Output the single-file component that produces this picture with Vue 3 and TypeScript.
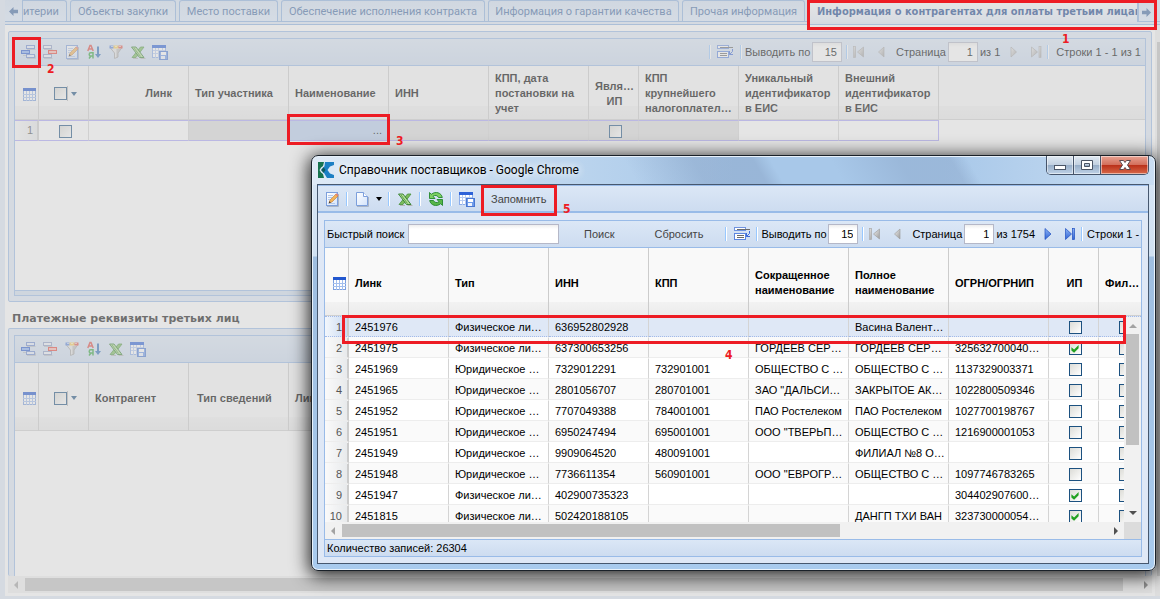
<script setup lang="ts">
import { ref } from 'vue'

interface Supplier {
  link: string
  kind: string
  inn: string
  kpp: string
  short: string
  full: string
  ogrn: string
  ip: boolean
}

const person = 'Физическое ли…'
const company = 'Юридическое …'

function supplier(link: string, kind: string, inn: string, kpp: string, short: string, full: string, ogrn: string, ip = false): Supplier {
  return { link, kind, inn, kpp, short, full, ogrn, ip }
}

const suppliers = ref<Supplier[]>([
  supplier('2451976', person, '636952802928', '', '', 'Васина Валент…', ''),
  supplier('2451975', person, '637300653256', '', 'ГОРДЕЕВ СЕР…', 'ГОРДЕЕВ СЕР…', '325632700040…', true),
  supplier('2451969', company, '7329012291', '732901001', 'ОБЩЕСТВО С …', 'ОБЩЕСТВО С …', '1137329003371'),
  supplier('2451965', company, '2801056707', '280701001', 'ЗАО "ДАЛЬСИ…', 'ЗАКРЫТОЕ АК…', '1022800509346'),
  supplier('2451952', company, '7707049388', '784001001', 'ПАО Ростелеком', 'ПАО Ростелеком', '1027700198767'),
  supplier('2451951', company, '6950247494', '695001001', 'ООО "ТВЕРЬП…', 'ОБЩЕСТВО С …', '1216900001053'),
  supplier('2451949', company, '9909064520', '480091001', '', 'ФИЛИАЛ №8 О…', ''),
  supplier('2451948', company, '7736611354', '560901001', 'ООО "ЕВРОГР…', 'ОБЩЕСТВО С …', '1097746783265'),
  supplier('2451947', person, '402900735323', '', '', '', '304402907600…', true),
  supplier('2451815', person, '502420188105', '', '', 'ДАНГП ТХИ ВАН', '323730000054…', true),
])

const selected = ref(0)
const search = ref('')

const tabs = [
  { text: 'итерии', cls: 't1' },
  { text: 'Объекты закупки', cls: 't2' },
  { text: 'Место поставки', cls: 't3' },
  { text: 'Обеспечение исполнения контракта', cls: 't4' },
  { text: 'Информация о гарантии качества', cls: 't5' },
  { text: 'Прочая информация', cls: 't6' },
  { text: 'Информация о контрагентах для оплаты третьим лицам', cls: 'active' },
]

const tools = [
  { icon: 'add', label: 'Добавить' },
  { icon: 'del', label: 'Удалить' },
  { icon: 'edit', label: 'Изменить' },
  { icon: 'sort', label: 'Сортировка' },
  { icon: 'filter', label: 'Фильтр' },
  { icon: 'excel', label: 'Экспорт в Excel' },
  { icon: 'save', label: 'Сохранить вид' },
]
const paymentTools = [tools[0], tools[1], tools[4], tools[3], tools[5], tools[6]]
</script>

<template>
  <svg class="defs" aria-hidden="true">
    <defs>
      <linearGradient id="gBlue" x1="0" y1="0" x2="0" y2="1">
        <stop offset="0" stop-color="#8db4f5" /><stop offset="1" stop-color="#2f62d4" />
      </linearGradient>
      <linearGradient id="gGrey" x1="0" y1="0" x2="1" y2="1">
        <stop offset="0" stop-color="#f0f0f0" /><stop offset="1" stop-color="#9a9a9a" />
      </linearGradient>
      <linearGradient id="gPage" x1="0" y1="0" x2="1" y2="1">
        <stop offset="0" stop-color="#ffffff" /><stop offset="1" stop-color="#d3e3fb" />
      </linearGradient>
    </defs>
    <symbol id="add" viewBox="0 0 16 16">
      <path d="M3 11.500h4M7 5.500h8.500M7 14.500h8.500v-3" stroke="#b9bfc9" fill="none" />
      <rect x="6.500" y="1.500" width="8" height="3" fill="#e4edfc" stroke="#6f8cd0" />
      <rect x="6.500" y="10.500" width="8" height="3" fill="#e4edfc" stroke="#6f8cd0" />
      <rect x="1.500" y="6.500" width="8" height="3" fill="#86aef5" stroke="#2c5fd0" />
    </symbol>
    <symbol id="del" viewBox="0 0 16 16">
      <path d="M2 5.500h8.500M2 14.500h8.500" stroke="#b9bfc9" fill="none" />
      <rect x="1.500" y="1.500" width="8" height="3" fill="#eef2fa" stroke="#8f9fc6" />
      <rect x="1.500" y="10.500" width="8" height="3" fill="#eef2fa" stroke="#8f9fc6" />
      <rect x="6.500" y="6.500" width="8" height="3" fill="#fbb9b0" stroke="#e8463c" />
    </symbol>
    <symbol id="edit" viewBox="0 0 16 16">
      <path d="M3 15.500h11.500V3" stroke="#a9b4c6" fill="none" />
      <rect x="2.500" y="1.500" width="11" height="13" fill="url(#gPage)" stroke="#7c9fdc" />
      <path d="M4 4.500h5M4 6.500h4M4 8.500h2M4 12.500h7" stroke="#b4c8e8" />
      <path d="M5 12l1-3 6-6 2 2-6 6z" fill="#f3b45a" stroke="#b87a3a" stroke-width=".6" />
      <path d="M11.500 3.500l1-1.200 2 2-1.200 1z" fill="#e77c70" />
      <path d="M5 12l.5-1.800 1.400 1.200z" fill="#222" />
    </symbol>
    <symbol id="sort" viewBox="0 0 16 16">
      <path d="M1.800 7L4 1.500h1L7.200 7M3 5h3.500" stroke="#e04a42" stroke-width="1.500" fill="none" />
      <path d="M7 14.500V8.800H4.800a1.600 1.600 0 000 3.200H7M5 12l-2 2.500" stroke="#35a53e" stroke-width="1.500" fill="none" />
      <path d="M12 2.500v9" stroke="#2e6fb8" stroke-width="2" />
      <path d="M9 10h6l-3 4z" fill="#2e6fb8" />
    </symbol>
    <symbol id="filter" viewBox="0 0 16 16">
      <path d="M2 3.500h12l-4 5.500v4L6.500 14.500V9z" fill="#e6e6e6" stroke="#a8a8a8" />
      <path d="M8.500 5v9l1.500-1V9l3-4z" fill="#a5a5a5" opacity=".6" />
      <rect x="1.500" y="1.500" width="4" height="3" fill="#5a86df" />
      <rect x="5.500" y="1.500" width="5" height="3" fill="#f9cf5a" />
      <rect x="10.500" y="1.500" width="4" height="3" fill="#e2574b" />
      <path d="M3 2.500h2M7 2.500h2M11 2.500h2" stroke="#fff" opacity=".6" />
    </symbol>
    <symbol id="excel" viewBox="0 0 16 16">
      <path d="M3 14.500h5M10.500 14.500h5" stroke="#b4b4b4" />
      <path d="M14 3h-3.500L2 13.500h4z" fill="#7cbc5e" stroke="#47913a" stroke-width=".8" />
      <path d="M1.500 3H6l8 10.500H9.500z" fill="#b4dc98" stroke="#2f7d2a" stroke-width=".9" />
      <path d="M4 4l6.500 8.500" stroke="#4f9d3d" stroke-width=".9" />
    </symbol>
    <symbol id="save" viewBox="0 0 16 16">
      <rect x=".5" y="1.500" width="13" height="12" fill="#fff" stroke="#8aacea" />
      <rect x="0" y="1" width="14" height="3" fill="#2d62d8" />
      <path d="M3.500 4v10M6.500 4v10M10.500 4v4M1 6.500h12M1 9.500h7" stroke="#b8cdf2" />
      <rect x="7.500" y="7.500" width="8" height="8" fill="#6e9bea" stroke="#4a78d2" />
      <rect x="9" y="8" width="5" height="3" fill="#fff" />
      <rect x="9" y="12" width="4" height="3" fill="#eef4ff" />
    </symbol>
    <symbol id="table" viewBox="0 0 13 13">
      <rect x=".5" y=".5" width="12" height="12" fill="#fff" stroke="#7b9fdf" />
      <path d="M3.500 3v10M6.500 3v10M9.500 3v10M0 6.500h13M0 9.500h13" stroke="#a3bfee" />
      <rect width="13" height="3" fill="#2257cf" />
    </symbol>
    <symbol id="page" viewBox="0 0 16 16">
      <path d="M3 15.500h11.500V6" stroke="#a9b4c6" fill="none" />
      <path d="M2.500 1.500h7l4 4v9h-11z" fill="url(#gPage)" stroke="#7c9fdc" />
      <path d="M9.500 1.500v4h4" fill="#fff" stroke="#7c9fdc" />
    </symbol>
    <symbol id="refresh" viewBox="0 0 16 16">
      <path d="M1.500 1.500v6H7L5 5.300C7 3.800 9.500 4.200 10.500 6.500h3.800C13.500 1.800 7.500-.2 3.300 3.300z" fill="#7fd063" stroke="#23872c" stroke-width=".9" />
      <path d="M14.500 14.500v-6H9l2 2.200C9 12.200 6.500 11.800 5.500 9.500H1.700C2.500 14.200 8.500 16.200 12.700 12.700z" fill="#58b548" stroke="#23872c" stroke-width=".9" />
    </symbol>
    <symbol id="rows" viewBox="0 0 16 16">
      <rect x=".5" y="1.500" width="11" height="3" fill="#fff" stroke="#6f93e0" />
      <rect x=".5" y="7.500" width="11" height="6" fill="#fff" stroke="#5c86e0" />
      <path d="M3 3.500h13M3 9.500h7M3 11.500h7" stroke="#6a6a6a" />
      <path d="M15.500 5v2.500l-3 3M12.500 7v3.500h3.500" stroke="#3f6bd8" fill="none" />
    </symbol>
    <symbol id="first" viewBox="0 0 12 12">
      <rect x=".5" y=".5" width="2" height="11" fill="url(#gGrey)" stroke="#aaa" stroke-width=".7" />
      <path d="M10.500 1v10L4.500 6z" fill="url(#gGrey)" stroke="#a0a0a0" stroke-width=".7" />
    </symbol>
    <symbol id="prev" viewBox="0 0 12 12">
      <path d="M9 1v10L3.500 6z" fill="url(#gGrey)" stroke="#a0a0a0" stroke-width=".7" />
    </symbol>
    <symbol id="nextOff" viewBox="0 0 12 12">
      <path d="M3 1v10l5.500-5z" fill="url(#gGrey)" stroke="#a0a0a0" stroke-width=".7" />
    </symbol>
    <symbol id="lastOff" viewBox="0 0 12 12">
      <rect x="9" y=".5" width="2" height="11" fill="url(#gGrey)" stroke="#aaa" stroke-width=".7" />
      <path d="M1.500 1v10l6-5z" fill="url(#gGrey)" stroke="#a0a0a0" stroke-width=".7" />
    </symbol>
    <symbol id="next" viewBox="0 0 12 12">
      <path d="M3 .5v11L9 6z" fill="url(#gBlue)" stroke="#1f4fc0" stroke-width=".7" />
    </symbol>
    <symbol id="last" viewBox="0 0 12 12">
      <rect x="8.500" y=".5" width="2" height="11" fill="url(#gBlue)" stroke="#1f4fc0" stroke-width=".7" />
      <path d="M1.500 .5v11l6-5.500z" fill="url(#gBlue)" stroke="#1f4fc0" stroke-width=".7" />
    </symbol>
    <symbol id="arrowL" viewBox="0 0 10 10">
      <path d="M0 5l5-5v3h5v4H5v3z" fill="#416aa3" />
    </symbol>
    <symbol id="arrowR" viewBox="0 0 10 10">
      <path d="M10 5L5 0v3H0v4h5v3z" fill="#416aa3" />
    </symbol>
  </svg>

  <main class="page">
    <nav class="tabbar">
      <div class="tabs">
        <button class="scroller left" aria-label="Назад"><svg><use href="#arrowL" /></svg></button>
        <button v-for="t in tabs" :key="t.text" class="tab" :class="t.cls">{{ t.text }}</button>
        <button class="scroller right" aria-label="Вперёд"><svg><use href="#arrowR" /></svg></button>
      </div>
    </nav>

    <div class="content">
      <div class="forms">
        <section class="panel">
          <div class="box">
            <div class="toolbar">
              <button v-for="t in tools" :key="t.icon" class="tool" :aria-label="t.label">
                <svg class="ico"><use :href="'#' + t.icon" /></svg>
              </button>
              <div class="pager">
                <i class="sep"></i>
                <button class="tool rowsbtn" aria-label="Строки"><svg class="ico"><use href="#rows" /></svg></button>
                <i class="sep"></i>
                <label class="by" for="size1">Выводить по</label>
                <input id="size1" class="num" type="text" value="15" />
                <i class="sep"></i>
                <button class="nav" aria-label="Первая"><svg><use href="#first" /></svg></button>
                <button class="nav" aria-label="Предыдущая"><svg><use href="#prev" /></svg></button>
                <label class="pg" for="page1">Страница</label>
                <input id="page1" class="num" type="text" value="1" />
                <span class="of">из 1</span>
                <button class="nav" aria-label="Следующая"><svg><use href="#nextOff" /></svg></button>
                <button class="nav" aria-label="Последняя"><svg><use href="#lastOff" /></svg></button>
                <i class="sep"></i>
                <span class="info">Строки 1 - 1 из 1</span>
              </div>
            </div>
            <div class="area first">
              <div class="headband"></div>
              <table class="grid main">
                <colgroup>
                  <col class="c-num" /><col class="c-chk" /><col class="c-100" /><col class="c-100" /><col class="c-100" />
                  <col class="c-100" /><col class="c-100" /><col class="c-50" /><col class="c-100" /><col class="c-100" /><col class="c-100" />
                </colgroup>
                <thead>
                  <tr>
                    <th class="tc"><svg class="tbl"><use href="#table" /></svg></th>
                    <th class="tc"><span class="pick"><input type="checkbox" aria-label="Выбрать все" /><i class="bar"></i><i class="caret"></i></span></th>
                    <th class="tr">Линк</th>
                    <th>Тип участника</th>
                    <th>Наименование</th>
                    <th>ИНН</th>
                    <th>КПП, дата<br />постановки на<br />учет</th>
                    <th class="tc">Явля…<br />ИП</th>
                    <th>КПП<br />крупнейшего<br />налогоплател…</th>
                    <th>Уникальный<br />идентификатор<br />в ЕИС</th>
                    <th>Внешний<br />идентификатор<br />в ЕИС</th>
                  </tr>
                </thead>
                <tbody>
                  <tr>
                    <td class="no">1</td>
                    <td class="tc"><input type="checkbox" aria-label="Выбрать строку" /></td>
                    <td></td>
                    <td class="off"></td>
                    <td class="cur">...</td>
                    <td class="off"></td>
                    <td class="off"></td>
                    <td class="off tc"><input type="checkbox" aria-label="Является ИП" /></td>
                    <td class="off"></td>
                    <td></td>
                    <td></td>
                  </tr>
                </tbody>
              </table>
            </div>
            <div class="foot"></div>
          </div>
        </section>

        <h2>Платежные реквизиты третьих лиц</h2>

        <section class="panel rest">
          <div class="box">
            <div class="toolbar">
              <button v-for="t in paymentTools" :key="t.icon" class="tool" :aria-label="t.label">
                <svg class="ico"><use :href="'#' + t.icon" /></svg>
              </button>
            </div>
            <div class="area">
              <div class="headband tall"></div>
              <table class="grid pay">
                <colgroup>
                  <col class="c-num" /><col class="c-chk" /><col class="c-100" /><col class="c-100" /><col class="c-100" />
                </colgroup>
                <thead>
                  <tr>
                    <th class="tc"><svg class="tbl"><use href="#table" /></svg></th>
                    <th class="tc"><span class="pick"><input type="checkbox" aria-label="Выбрать все" /><i class="bar"></i><i class="caret"></i></span></th>
                    <th>Контрагент</th>
                    <th class="kind">Тип сведений</th>
                    <th>Линк</th>
                  </tr>
                </thead>
              </table>
            </div>
          </div>
        </section>
        <div class="hscroll outer"><i class="al"></i><i class="thumb"></i><i class="ar"></i></div>
      </div>
      <div class="vedge"><i></i></div>
    </div>
    <div class="mask"></div>
  </main>

  <section class="window" role="dialog" aria-labelledby="wtitle">
    <header class="title">
      <svg class="logo" viewBox="0 0 16 16">
        <path d="M0 0h6L5 4 3 5.500 1.500 8 3 10.500 5 12l1 4H0z" fill="#17734f" />
        <path d="M7 0h9v3l-4 1.500L9.500 8l2.500 3.500 4 1.500v3H9l-3-5-2-3 2.500-4z" fill="#1c7fc4" />
        <path d="M3 8l2.500-3L7.500 8l-2 3z" fill="#0c5a60" />
      </svg>
      <h1 id="wtitle">Справочник поставщиков - Google Chrome</h1>
      <div class="wbtns">
        <button class="wb" aria-label="Свернуть"><svg viewBox="0 0 14 12"><rect x="1.500" y="6.500" width="11" height="4" fill="#fff" stroke="#4b5566" /></svg></button>
        <button class="wb" aria-label="Развернуть"><svg viewBox="0 0 14 12"><path d="M1.500 1.500h11v9h-11zM4.500 4.500h5v3h-5z" fill="#fff" fill-rule="evenodd" stroke="#4b5566" /></svg></button>
        <button class="wb close" aria-label="Закрыть"><svg viewBox="0 0 14 12"><path d="M1.500 1.500h4L7 3.500l1.500-2h4L9.500 6l3 4.500h-4L7 8.500l-1.500 2h-4L4.500 6z" fill="#fff" stroke="#5c4a4e" /></svg></button>
      </div>
    </header>

    <div class="client">
      <div class="toolbar wtools">
        <button class="tool" aria-label="Изменить"><svg class="ico"><use href="#edit" /></svg></button>
        <i class="sep"></i>
        <button class="tool menu" aria-label="Создать"><svg class="ico"><use href="#page" /></svg><i class="caret black"></i></button>
        <i class="sep"></i>
        <button class="tool" aria-label="Экспорт в Excel"><svg class="ico"><use href="#excel" /></svg></button>
        <i class="sep"></i>
        <button class="tool" aria-label="Обновить"><svg class="ico"><use href="#refresh" /></svg></button>
        <i class="sep"></i>
        <button class="tool" aria-label="Сохранить вид"><svg class="ico"><use href="#save" /></svg></button>
        <button class="text keep">Запомнить</button>
      </div>

      <div class="list">
        <div class="toolbar">
          <label class="quick" for="q">Быстрый поиск</label>
          <input id="q" v-model="search" class="search" type="text" />
          <button class="text find">Поиск</button>
          <button class="text reset">Сбросить</button>
          <div class="pager wide">
            <i class="sep"></i>
            <button class="tool rowsbtn" aria-label="Строки"><svg class="ico"><use href="#rows" /></svg></button>
            <i class="sep"></i>
            <label class="by" for="size2">Выводить по</label>
            <input id="size2" class="num" type="text" value="15" />
            <i class="sep"></i>
            <button class="nav" aria-label="Первая"><svg><use href="#first" /></svg></button>
            <button class="nav" aria-label="Предыдущая"><svg><use href="#prev" /></svg></button>
            <label class="pg" for="page2">Страница</label>
            <input id="page2" class="num" type="text" value="1" />
            <span class="of">из 1754</span>
            <button class="nav" aria-label="Следующая"><svg><use href="#next" /></svg></button>
            <button class="nav" aria-label="Последняя"><svg><use href="#last" /></svg></button>
            <i class="sep"></i>
            <span class="info">Строки 1 -</span>
          </div>
        </div>
        <div class="area">
          <div class="headband tall"></div>
          <table class="grid supp">
            <colgroup>
              <col class="c-num" /><col class="c-100" /><col class="c-100" /><col class="c-100" /><col class="c-100" />
              <col class="c-100" /><col class="c-100" /><col class="c-100" /><col class="c-50" /><col class="c-50" />
            </colgroup>
            <thead>
              <tr>
                <th class="tc"><svg class="tbl"><use href="#table" /></svg></th>
                <th>Линк</th>
                <th>Тип</th>
                <th>ИНН</th>
                <th>КПП</th>
                <th>Сокращенное<br />наименование</th>
                <th>Полное<br />наименование</th>
                <th>ОГРН/ОГРНИП</th>
                <th class="tc">ИП</th>
                <th>Фил…</th>
              </tr>
            </thead>
            <tbody>
              <tr v-for="(s, i) in suppliers" :key="s.link" :class="{ sel: i === selected }" @click="selected = i">
                <td class="no">{{ i + 1 }}</td>
                <td>{{ s.link }}</td>
                <td>{{ s.kind }}</td>
                <td>{{ s.inn }}</td>
                <td>{{ s.kpp }}</td>
                <td>{{ s.short }}</td>
                <td>{{ s.full }}</td>
                <td>{{ s.ogrn }}</td>
                <td class="tc"><input v-model="s.ip" type="checkbox" aria-label="ИП" /></td>
                <td class="tc"><input type="checkbox" aria-label="Филиал" /></td>
              </tr>
            </tbody>
          </table>
          <div class="vscroll"><i class="au"></i><i class="thumb"></i><i class="ad"></i></div>
        </div>
        <div class="hscroll inner"><i class="al"></i><i class="thumb"></i><i class="ar"></i><i class="corner"></i></div>
        <footer class="status">Количество записей: 26304</footer>
      </div>
    </div>
  </section>

  <div class="mark m1"></div><b class="step s1">1</b>
  <div class="mark m2"></div><b class="step s2">2</b>
  <div class="mark m3"></div><b class="step s3">3</b>
  <div class="mark m4"></div><b class="step s4">4</b>
  <div class="mark m5"></div><b class="step s5">5</b>
</template>

<style>
html,
body {
  height: 100%;
  overflow: hidden;
}
#app {
  height: 100%;
  position: relative;
}
</style>

<style scoped>
* {
  box-sizing: border-box;
}
.defs {
  position: absolute;
  width: 0;
  height: 0;
}
button,
input {
  font: inherit;
  margin: 0;
  padding: 0;
  border: 0;
  background: none;
  color: inherit;
  border-radius: 0;
}
svg {
  display: block;
}
.page {
  position: relative;
  height: 100%;
  display: flex;
  flex-direction: column;
  padding: 0 0 3px 5px;
  background: #dfe8f6;
  font: 11px/15px "Liberation Sans", Arial, sans-serif;
  overflow: hidden;
}
.mask {
  position: absolute;
  inset: 0;
  background: #ccc;
  opacity: 0.5;
}

/* tabs */
.tabbar {
  height: 25px;
  padding-bottom: 3px;
  background: #dfe8f6;
  border-bottom: 1px solid #8db2e3;
}
.tabs {
  display: flex;
  height: 22px;
  padding-right: 5px;
  gap: 3px;
  border-bottom: 1px solid #8db2e3;
  background: #d9e6f6;
}
.tab {
  flex: none;
  height: 21px;
  border: 1px solid #8db2e3;
  border-bottom: 0;
  border-radius: 3px 3px 0 0;
  padding-top: 1px;
  background: linear-gradient(#d5e3f5, #deecfd);
  color: #416aa3;
  font: 11px/19px Roboto, "Liberation Sans", sans-serif;
  white-space: nowrap;
  overflow: hidden;
}
.t1 {
  width: 44px;
  margin-left: -3px;
  border-left: 0;
  border-radius: 0 3px 0 0;
  text-align: left;
}
.t2 { width: 106px; }
.t3 { width: 99px; }
.t4 { width: 204px; }
.t5 { width: 191px; }
.t6 { width: 123px; }
.active {
  flex: 1 1 0;
  min-width: 0;
  height: 22px;
  margin-right: -3px;
  padding-left: 8px;
  text-align: left;
  background: linear-gradient(#fff, #e3ecf9);
  color: #15428b;
  font: bold 11px/20px "DejaVu Sans Condensed", "DejaVu Sans", sans-serif;
}
.scroller {
  flex: none;
  height: 21px;
  display: grid;
  place-items: center;
  padding-top: 2px;
  background: linear-gradient(#d5e3f5, #deecfd);
}
.scroller svg {
  width: 9px;
  height: 9px;
}
.left {
  width: 18px;
  border-right: 1px solid #8db2e3;
}
.right {
  width: 17px;
  border: 1px solid #8db2e3;
  border-bottom: 0;
}

/* panels */
.content {
  flex: 1;
  min-height: 0;
  display: flex;
  background: #fff;
}
.forms {
  flex: 1;
  min-width: 0;
  display: flex;
  flex-direction: column;
  padding: 6px 3px 3px;
}
.vedge {
  width: 5px;
  padding: 17px 0 20px 2px;
  background: #f1f1f1;
}
.vedge i {
  display: block;
  height: 100%;
  background: #c1c1c1;
}
.panel {
  border: 1px solid #99bbe8;
  border-radius: 2px;
  padding: 6px 5px 5px;
  background: #dfe8f6;
}
.box {
  display: flex;
  flex-direction: column;
  border: 1px solid #99bbe8;
  background: #fff;
}
.rest {
  flex: 1;
  min-height: 0;
  display: flex;
  border-bottom: 0;
  padding-bottom: 0;
}
.rest .box {
  flex: 1;
  border-bottom: 0;
}
.foot {
  height: 5px;
  border-top: 1px solid #99bbe8;
  background: #d3e1f1;
}
h2 {
  margin: 0;
  padding: 5px 0 0 4px;
  height: 26px;
  font: bold 11px/24px "DejaVu Sans", sans-serif;
  color: #111;
}
.toolbar {
  flex: none;
  display: flex;
  align-items: center;
  height: 27px;
  padding-left: 2px;
  background: linear-gradient(#dbe7f6, #cddcf0);
  border-bottom: 1px solid #99bbe8;
  white-space: nowrap;
}
.toolbar > *,
.pager > * {
  flex: none;
}
.tool {
  width: 22px;
  height: 22px;
  display: grid;
  place-items: center;
}
.ico {
  width: 16px;
  height: 16px;
}
.pager {
  display: flex;
  align-items: center;
  margin-left: auto;
  padding-right: 4px;
}
.sep {
  width: 2px;
  height: 14px;
  border-left: 1px solid #98c8ff;
  background: #fff;
}
.rowsbtn {
  width: 29px;
}
.by {
  width: 70px;
  padding-left: 3px;
}
.num {
  width: 30px;
  height: 20px;
  margin-right: 4px;
  padding-right: 4px;
  border: 1px solid #b5b8c8;
  background: linear-gradient(#eee, #fff 4px);
  text-align: right;
}
.nav {
  width: 22px;
  height: 20px;
  display: grid;
  place-items: center;
}
.nav svg {
  width: 12px;
  height: 12px;
}
.pg {
  width: 56px;
  padding-left: 4px;
}
.of {
  padding-right: 3px;
}
.pg + .num {
  margin-right: 2px;
}
.info {
  padding-left: 7px;
}

/* tables */
.area {
  position: relative;
  flex: 1;
  min-height: 0;
  overflow: hidden;
  background: #fff;
}
.first {
  flex: none;
  height: 224px;
}
.headband {
  height: 54px;
  margin-bottom: -54px;
  background: linear-gradient(#f9f9f9 75%, #f1f1f1 76%, #ececec);
  border-bottom: 1px solid #d0d0d0;
}
.tall {
  height: 68px;
  margin-bottom: -68px;
  background: linear-gradient(#f9f9f9 80%, #f2f2f2 81%, #ececec);
}
.grid {
  position: relative;
  table-layout: fixed;
  border-collapse: separate;
  border-spacing: 0;
}
.main { width: 924px; }
.pay { width: 374px; }
.supp { width: 824px; }
.c-num { width: 24px; }
.c-chk { width: 50px; }
.c-50 { width: 50px; }
.c-100 { width: 100px; }
th {
  height: 54px;
  padding: 1px 0 0 6px;
  text-align: left;
  vertical-align: middle;
  font-weight: bold;
  white-space: nowrap;
  border-right: 1px solid #ccc;
}
.pay th,
.supp th {
  height: 68px;
  padding-top: 2px;
}
.tc {
  text-align: center;
  padding-left: 2px;
}
.kind {
  padding-left: 8px;
}
.tr {
  text-align: right;
  padding-right: 16px;
}
td {
  height: 21px;
  padding: 0 0 0 6px;
  line-height: 18px;
  border-top: 1px solid transparent;
  border-right: 1px solid #d4d4d4;
  border-bottom: 1px solid #ededed;
  overflow: hidden;
  white-space: nowrap;
}
td.tc {
  padding: 0 0 0 3px;
}
.no {
  padding: 0 5px 0 0;
  text-align: right;
  color: #555;
  border-right: 2px solid #ccc;
  background: linear-gradient(90deg, #fafafa, #e8eaec);
}
.main td {
  padding-bottom: 1px;
  line-height: 18px;
  border-top: 1px solid #aaa4fa;
  border-bottom-color: #aaa4fa;
}
.main td:last-child {
  border-right-color: #aaa4fa;
}
.main .no {
  padding-right: 4px;
}
.off {
  background: #dcdcdc;
}
.cur {
  background: #b8cfee;
  text-align: right;
  padding-right: 6px;
}
.supp tbody tr:nth-child(even) {
  background: #fafafa;
}
.supp tbody tr.sel {
  background: #dfe8f6;
}
.supp .sel td {
  border-top: 1px dotted #a3bae9;
  border-bottom: 1px dotted #a3bae9;
}
.sel .no {
  background: linear-gradient(90deg, #f3f7fc, #c9daf2);
}
.tbl {
  display: inline-block;
  vertical-align: middle;
  width: 13px;
  height: 13px;
  margin-left: 4px;
}
input[type="checkbox"] {
  appearance: none;
  position: relative;
  width: 13px;
  height: 13px;
  vertical-align: middle;
  border: 1px solid #1c5180;
  background: linear-gradient(135deg, #dcdcd7, #fff);
}
input[type="checkbox"]:checked::after {
  content: "";
  position: absolute;
  inset: 1px;
  background: #21a121;
  clip-path: polygon(10% 35%, 40% 60%, 90% 10%, 90% 45%, 40% 95%, 10% 70%);
}
.pick {
  display: inline-flex;
  align-items: center;
  margin-left: 2px;
  vertical-align: middle;
}
.bar {
  width: 1px;
  height: 15px;
  margin-right: 3px;
  background: #b9b9b9;
}
.caret {
  border: 3px solid transparent;
  border-top: 4px solid #1c5180;
  border-bottom: 0;
}
.black {
  border-top-color: #000;
}

/* scrollbars */
.hscroll {
  flex: none;
  display: flex;
  align-items: center;
  height: 17px;
  background: #f1f1f1;
}
.hscroll .thumb {
  align-self: stretch;
  margin: 2px 0;
  background: #c1c1c1;
}
.outer .thumb {
  flex: 1;
  margin-right: 21px;
}
.inner .thumb {
  width: 61%;
}
.al,
.ar {
  flex: none;
  border: 4px solid transparent;
}
.al {
  border-left: 0;
  border-right-color: #a3a3a3;
  margin: 0 7px 0 6px;
}
.ar {
  border-right: 0;
  border-left-color: #505050;
  margin-left: auto;
  margin-right: 6px;
}
.outer .ar {
  margin-right: 4px;
}
.corner {
  width: 17px;
  height: 100%;
  background: #dcdcdc;
}
.vscroll {
  position: absolute;
  top: 69px;
  right: 0;
  bottom: 0;
  width: 17px;
  display: flex;
  flex-direction: column;
  align-items: center;
  background: #f1f1f1;
}
.vscroll .thumb {
  width: 13px;
  height: 54%;
  margin-bottom: auto;
  background: #c1c1c1;
}
.au {
  margin: 7px 0 6px;
  border: 4px solid transparent;
  border-top: 0;
  border-bottom-color: #a3a3a3;
}
.ad {
  margin-bottom: 7px;
  border: 4px solid transparent;
  border-bottom: 0;
  border-top-color: #505050;
}

/* dialog window */
.window {
  position: absolute;
  left: 311px;
  top: 155px;
  right: 4px;
  bottom: 28px;
  display: flex;
  flex-direction: column;
  padding: 0 6px 6px 5px;
  border: 1px solid #1a2129;
  border-radius: 7px;
  background:
    linear-gradient(60deg, transparent 38%, rgba(130, 155, 190, 0.4) 46%, rgba(130, 155, 190, 0.4) 53%, transparent 55%, transparent 62%, rgba(130, 155, 190, 0.35) 70%, rgba(130, 155, 190, 0.35) 76%, transparent 78%) top / 100% 29px no-repeat,
    linear-gradient(90deg, #dfeaf6, #bcd5ee 30%, #a8c8e9 50%, #a8c8e9 75%, #c9ddf2) top / 100% 29px no-repeat,
    linear-gradient(#d7e5f4, #d1e1f2 100px, #9fbee0 101px, #a9cbee);
  box-shadow: inset 0 0 0 1px #e9f2fb, 0 3px 18px 2px rgba(0, 0, 0, 0.85);
  font: 11px/15px "Liberation Sans", Arial, sans-serif;
  color: #000;
}
.title {
  flex: none;
  display: flex;
  align-items: center;
  height: 28px;
  padding-left: 1px;
}
.logo {
  width: 16px;
  height: 16px;
}
h1 {
  margin: 0 0 0 5px;
  font: 12px/20px Roboto, "Open Sans", sans-serif;
  text-shadow: 0 0 8px #fff, 0 0 8px #fff;
}
.wbtns {
  display: flex;
  align-self: flex-start;
  margin-left: auto;
  height: 19px;
  border: 1px solid #46546a;
  border-top: 0;
  border-radius: 0 0 5px 5px;
  overflow: hidden;
}
.wb {
  width: 27px;
  display: grid;
  place-items: center;
  border-right: 1px solid #46546a;
  background: linear-gradient(#e0e9f2, #c3d1e1 48%, #96acc6 50%, #bfd2e7);
  box-shadow: inset 0 0 0 1px rgba(255, 255, 255, 0.5);
}
.wb svg {
  width: 14px;
  height: 12px;
}
.close {
  width: 47px;
  border-right: 0;
  background: linear-gradient(#e8a292, #d3705d 48%, #b92f18 50%, #d8694a);
}
.client {
  flex: 1;
  min-height: 0;
  display: flex;
  flex-direction: column;
  border: 1px solid #47586f;
  background: #dfe8f6;
}
.wtools {
  height: 28px;
  padding-left: 3px;
  border-top: 1px solid #99bbe8;
  border-bottom: 2px solid #99bbe8;
}
.wtools .sep {
  margin: 0 4px 0 3px;
}
.menu {
  width: 33px;
  grid-template-columns: 20px 13px;
}
.text {
  color: #444;
  height: 20px;
}
.keep {
  margin-left: 13px;
  padding-top: 1px;
}
.list {
  flex: 1;
  min-height: 0;
  display: flex;
  flex-direction: column;
  margin: 7px 6px 6px;
  border: 1px solid #99bbe8;
}
.list .toolbar {
  overflow: hidden;
}
.quick {
  width: 81px;
}
.search {
  width: 151px;
  height: 20px;
  padding: 0 3px;
  border: 1px solid #b5b8c8;
  background: linear-gradient(#eee, #fff 4px);
}
.find {
  margin-left: 25px;
}
.reset {
  margin: 0 22px 0 40px;
}
.wide {
  margin-left: 0;
  padding-right: 0;
}
.wide .of {
  padding-right: 2px;
}
.wide .info {
  padding-left: 4px;
}
.status {
  flex: none;
  height: 17px;
  padding: 1px 0 0 2px;
  border-top: 1px solid #99bbe8;
  background: linear-gradient(#dbe7f6, #cddcf0);
}

/* step marks */
.mark {
  position: absolute;
  border: 3px solid #ed1c24;
  pointer-events: none;
}
.m1 { left: 807px; right: 3px; top: 0; height: 30px; }
.m2 { left: 12px; top: 37px; width: 29px; height: 31px; }
.m3 { left: 287px; top: 114px; width: 103px; height: 31px; }
.m4 { left: 342px; right: 34px; top: 315px; height: 29px; }
.m5 { left: 481px; top: 185px; width: 76px; height: 31px; }
.step {
  position: absolute;
  font: bold 12px/14px "DejaVu Sans Condensed", "DejaVu Sans", sans-serif;
  color: #ed1c24;
}
.s1 { left: 1062px; top: 32px; }
.s2 { left: 47px; top: 62px; }
.s3 { left: 396px; top: 134px; }
.s4 { left: 725px; top: 348px; }
.s5 { left: 563px; top: 202px; }
</style>
